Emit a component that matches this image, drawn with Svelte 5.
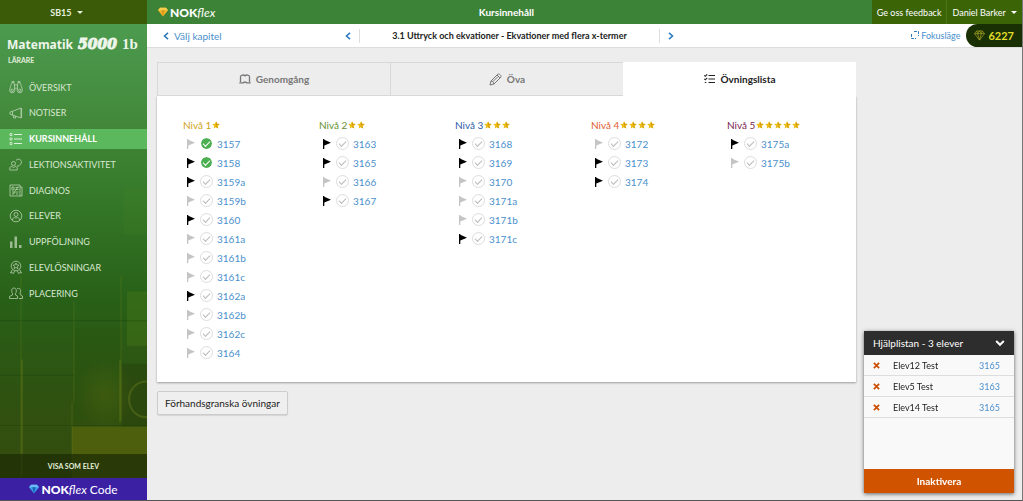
<script>
    let active_tab = 'ovningslista';
    let help_open = true;

    const menu = [
        { icon: 'binoculars', label: 'ÖVERSIKT' },
        { icon: 'megaphone', label: 'NOTISER' },
        { icon: 'list', label: 'KURSINNEHÅLL', active: true },
        { icon: 'lesson', label: 'LEKTIONSAKTIVITET' },
        { icon: 'diagnos', label: 'DIAGNOS' },
        { icon: 'user', label: 'ELEVER' },
        { icon: 'bars', label: 'UPPFÖLJNING' },
        { icon: 'award', label: 'ELEVLÖSNINGAR' },
        { icon: 'people', label: 'PLACERING' }
    ];

    const tabs = [
        { id: 'genomgang', label: 'Genomgång' },
        { id: 'ova', label: 'Öva' },
        { id: 'ovningslista', label: 'Övningslista' }
    ];

    function ex(name, flag = false, done = false) {
        return { name, flag, done };
    }

    let levels = [
        { nr: 1, items: [
            ex('3157', false, true), ex('3158', true, true), ex('3159a', true), ex('3159b'),
            ex('3160', true), ex('3161a'), ex('3161b'), ex('3161c'),
            ex('3162a', true), ex('3162b'), ex('3162c'), ex('3164')
        ] },
        { nr: 2, items: [ex('3163', true), ex('3165', true), ex('3166'), ex('3167', true)] },
        { nr: 3, items: [
            ex('3168', true), ex('3169', true), ex('3170'), ex('3171a'), ex('3171b'), ex('3171c', true)
        ] },
        { nr: 4, items: [ex('3172'), ex('3173', true), ex('3174', true)] },
        { nr: 5, items: [ex('3175a', true), ex('3175b')] }
    ];

    let help = [
        { name: 'Elev12 Test', exercise: '3165' },
        { name: 'Elev5 Test', exercise: '3163' },
        { name: 'Elev14 Test', exercise: '3165' }
    ];

    function toggle_flag(item) {
        item.flag = !item.flag;
        levels = levels;
    }
    function remove_help(row) {
        help = help.filter((h) => h !== row);
    }
</script>

<div class="page">
    <aside class="sidebar">
        <svg class="backdrop" viewBox="0 0 147 454" preserveAspectRatio="none" aria-hidden="true">
            <defs>
                <linearGradient id="leaf" x1="0" y1="0" x2="0" y2="1">
                    <stop offset="0" stop-color="#4c9b4f" />
                    <stop offset="0.2" stop-color="#43893b" />
                    <stop offset="0.38" stop-color="#347728" />
                    <stop offset="0.58" stop-color="#286018" />
                    <stop offset="0.78" stop-color="#2f5211" />
                    <stop offset="1" stop-color="#374b0d" />
                </linearGradient>
                <radialGradient id="glow">
                    <stop offset="0" stop-color="#66720f" stop-opacity="0.3" />
                    <stop offset="1" stop-color="#66720f" stop-opacity="0" />
                </radialGradient>
            </defs>
            <rect width="147" height="454" fill="url(#leaf)" />
            <rect x="124" y="156" width="23" height="45" fill="#4b8721" opacity="0.15" />
            <rect x="127" y="255" width="20" height="52" fill="#5a8b16" opacity="0.25" />
            <rect x="74" y="290" width="47" height="90" fill="#24520b" opacity="0.2" />
            <rect x="122" y="324" width="25" height="60" fill="#263b0c" opacity="0.4" />
            <ellipse cx="105" cy="354" rx="30" ry="34" fill="url(#glow)" />
            <rect x="72" y="384" width="75" height="70" fill="#68700c" opacity="0.5" />
            <path d="M0 283h147M0 335h74M0 383h147" stroke="#193f08" opacity="0.4" />
            <path d="M21 240V454M72 360v74M74 265v95M121 240v138" stroke="#84951c" opacity="0.25" fill="none" />
            <path d="M22 320v110M120 320v60" stroke="#91991b" opacity="0.4" />
            <circle cx="146" cy="358" r="17" fill="none" stroke="#62761b" stroke-width="2" opacity="0.5" />
        </svg>
        <button class="class_pick">SB15 <i class="caret"></i></button>
        <h1 class="book"><span>Matematik</span><span class="number">5000</span><span class="level">1b</span></h1>
        <p class="role">LÄRARE</p>
        <nav class="menu">
            {#each menu as item}
                <a href="#{item.icon}" class:active={item.active}>
                    <svg viewBox="0 0 14 14" width="14" height="14" fill="none" stroke="currentColor" stroke-width="0.8">
                        {#if item.icon == 'binoculars'}
                            <path d="M5.7 10.3a2.5 2.5 0 1 1-5 0c0-2 1.600-6 2-7 .3-.8 2.300-.8 2.600 0l.4 7zM8.300 10.300a2.500 2.500 0 1 0 5 0c0-2-1.600-6-2-7-.3-.8-2.300-.8-2.600 0zM5.500 5h3M5.700 8.200h2.600M3 3V1.500h2V3M9 3V1.500h2V3" />
                            <circle cx="3.200" cy="10.300" r="1.200" /><circle cx="10.800" cy="10.300" r="1.200" />
                        {:else if item.icon == 'megaphone'}
                            <path d="M1 6l2.500-.7L12 2v10L3.500 9 1 8.200zM12.600 2v10M3.500 5.300V9M4 9.200l.8 2.800h2l-.6-2" />
                        {:else if item.icon == 'list'}
                            <path d="M5 2.500h8M5 7h8M5 11.500h8" stroke-width="1" />
                            <path d="M1 1.500h2v2H1zM1 6h2v2H1zM1 10.500h2v2H1z" />
                        {:else if item.icon == 'lesson'}
                            <circle cx="4.500" cy="6.500" r="2" />
                            <path d="M.8 13v-2c0-1 1-1.500 2-1.800.4 1.600 3 1.600 3.400 0 1 .3 2 .8 2 1.800v2zM7 3.500a3 3 0 1 1 3.500 4.500L9 9.500V8" />
                        {:else if item.icon == 'diagnos'}
                            <path d="M1 2h10v11H1zM11 4h2v9h-2M3 4h2v3H3zM6.500 4.500h3M6.500 6.500h3M3 9h6.500M3 11h2v-2M7 11h2" />
                            <path d="M5.500 8.500l4-5" />
                        {:else if item.icon == 'user'}
                            <circle cx="7" cy="7" r="5.800" /><circle cx="7" cy="5.500" r="2" />
                            <path d="M3.200 11c.3-2 2-2.400 2.600-2.400.5.5 1.900.5 2.400 0 .6 0 2.300.4 2.600 2.400" />
                        {:else if item.icon == 'bars'}
                            <path d="M1 6.500h2.500V13H1zM5.500 1.500H8V13H5.500zM10 10h2.500v3H10z" fill="currentColor" stroke="none" opacity="0.8" />
                        {:else if item.icon == 'award'}
                            <circle cx="7" cy="6" r="4.800" /><path d="M7 3l.9 1.900 2 .3-1.400 1.400.3 2L7 7.600l-1.800 1 .3-2-1.400-1.400 2-.3zM3.500 9.500L1.500 13l2-.3.8 1 1.500-3M10.500 9.500l2 3.500-2-.3-.8 1-1.500-3" />
                        {:else}
                            <path d="M.5 12.500v-2l3-1.500V7.500C2 5.500 2.500 2 5 2s3 3.500 1.500 5.500V9l2 1v2.500zM8 2.800c2.500-1.500 4.500 1 3.200 4V8.500l2.300 1.500v2.500H10" />
                        {/if}
                    </svg>
                    {item.label}
                </a>
            {/each}
        </nav>
        <button class="as_student">VISA SOM ELEV</button>
        <a href="#code" class="code">
            <svg viewBox="0 0 12 12" width="10" height="10"><path d="M2.500 1h7L12 4 6 11.500 0 4z" fill="#3c9be8" /><path d="M2.500 1L0 4h12L9.500 1z" fill="#6dbcf5" /><path d="M4 4l2 7.500L8 4z" fill="#1764b5" /></svg>
            <b>NOK</b><em>flex</em>&nbsp;Code
        </a>
    </aside>

    <div class="main">
        <header class="topbar">
            <a href="#home" class="logo">
                <svg viewBox="0 0 12 12" width="10" height="10"><path d="M2.500 1h7L12 4 6 11.500 0 4z" fill="#efb52b" /><path d="M2.500 1L0 4h12L9.500 1z" fill="#f8cd4d" /><path d="M4 4l2 7.500L8 4z" fill="#d9981a" /></svg>
                <b>NOK</b><em>flex</em>
            </a>
            <h2>Kursinnehåll</h2>
            <div class="account">
                <button>Ge oss feedback</button>
                <button>Daniel Barker <i class="caret"></i></button>
            </div>
        </header>

        <div class="subbar">
            <a href="#chapters" class="chapter">
                <svg viewBox="0 0 6 8" width="6" height="8"><path d="M5 .8L1.500 4 5 7.200" /></svg>
                Välj kapitel
            </a>
            <div class="pager">
                <button aria-label="Föregående"><svg viewBox="0 0 6 8" width="6" height="8"><path d="M5 .8L1.500 4 5 7.200" /></svg></button>
                <h3>3.1 Uttryck och ekvationer - Ekvationer med flera x-termer</h3>
                <button aria-label="Nästa"><svg viewBox="0 0 6 8" width="6" height="8"><path d="M1 .8L4.500 4 1 7.200" /></svg></button>
            </div>
            <div class="tools">
                <a href="#focus">
                    <svg viewBox="0 0 8 8" width="8" height="8" class="thin"><path d="M3 .5h4.500V5M.5 3v4.500H5" /></svg>
                    Fokusläge
                </a>
                <span class="gems">
                    <svg viewBox="0 0 12 12" width="11" height="11"><path d="M3 1h6l2.500 3L6 11 .5 4zM.5 4h11M3 1l1 3 2 7 2-7 1-3M4 4l2-3 2 3" /></svg>
                    6227
                </span>
            </div>
        </div>

        <main>
            <div class="tabs" role="tablist">
                {#each tabs as tab}
                    <button role="tab" aria-selected={active_tab == tab.id} class:active={active_tab == tab.id} on:click={() => active_tab = tab.id}>
                        {#if tab.id == 'genomgang'}
                            <svg viewBox="0 0 12 10" width="12" height="10"><path d="M1.500 8V2.800C1.500.6 5 .6 6 1.800 7 .6 10.500.6 10.500 2.800V8M.3 8.800h3.500c1 0 1.200-.8 2.200-.8s1.200.8 2.200.8h3.500" stroke-width="1.300" /></svg>
                        {:else if tab.id == 'ova'}
                            <svg viewBox="0 0 13 13" width="13" height="13"><path d="M1 12l1-4L8.800 1.200c1.200-1 4 1.500 3 3L5 11zM2 8c1.500 0 3 1.500 3 3M8 2l3 3M4 8.500L9 3.500" /></svg>
                        {:else}
                            <svg viewBox="0 0 11 10" width="11" height="10"><path d="M4.500 1.500H11M4.500 5H11M4.500 8.500H11" stroke-width="1.200" /><path d="M.3 1.300l1 1L3.200.3M.3 4.800l1 1 1.900-2M.8 8.500h1.500" stroke-width="1.100" /></svg>
                        {/if}
                        {tab.label}
                    </button>
                {/each}
            </div>
            <section class="panel">
                {#each levels as level}
                    <div class="level l{level.nr}">
                        <h4>
                            Nivå {level.nr}
                            <span class="stars">
                                {#each Array(level.nr) as _}
                                    <svg viewBox="0 0 10 10" width="8" height="8"><path d="M5 .3l1.400 3.100 3.400.4-2.500 2.300.7 3.400L5 7.800 2 9.500l.7-3.400L.2 3.800l3.400-.4z" fill="#ecbd16" /><path d="M5 .3l1.400 3.100 3.400.4L5 5.500zM5 5.500l3 4L5 7.800z" fill="#d19a0a" /></svg>
                                {/each}
                            </span>
                        </h4>
                        <ul>
                            {#each level.items as item}
                                <li>
                                    <button class="flag" class:on={item.flag} aria-label="Flagga {item.name}" on:click={() => toggle_flag(item)}>
                                        <svg viewBox="0 0 8 10" width="8" height="10"><path d="M0 0h1.300v.8L8 3.700 1.300 6.500V10H0z" fill="currentColor" /></svg>
                                    </button>
                                    <input type="checkbox" bind:checked={item.done} aria-label="Klar {item.name}">
                                    <a href="#{item.name}">{item.name}</a>
                                </li>
                            {/each}
                        </ul>
                    </div>
                {/each}
            </section>
            <button class="preview">Förhandsgranska övningar</button>
        </main>
    </div>
</div>

<section class="help">
    <button class="help_head" on:click={() => help_open = !help_open}>
        Hjälplistan - {help.length} elever
        <svg viewBox="0 0 10 8" width="10" height="8"><path d="M1.200 2L5 5.800 8.800 2" /></svg>
    </button>
    {#if help_open}
        <ul>
            {#each help as row}
                <li>
                    <button aria-label="Ta bort {row.name}" on:click={() => remove_help(row)}>
                        <svg viewBox="0 0 8 8" width="7" height="7"><path d="M1 1l6 6M7 1L1 7" /></svg>
                    </button>
                    <span>{row.name}</span>
                    <a href="#{row.exercise}">{row.exercise}</a>
                </li>
            {/each}
        </ul>
        <button class="deactivate">Inaktivera</button>
    {/if}
</section>

<style>
    :global(body) {
        background: #ededed;
        font-family: Lato, sans-serif;
        font-size: 10px;
        color: #222;
    }
    * {
        box-sizing: border-box;
    }
    h1, h2, h3, h4, p, ul {
        margin: 0;
        padding: 0;
        list-style: none;
    }
    button {
        font: inherit;
        color: inherit;
        background: none;
        border: 0;
        padding: 0;
        cursor: pointer;
    }
    a {
        color: #4a8fcd;
        text-decoration: none;
    }
    svg {
        flex: none;
    }
    .page {
        display: grid;
        grid-template-columns: 147px 1fr;
        min-height: 100vh;
        border-right: 1px solid #777;
        border-bottom: 1px solid #555;
    }
    .caret {
        display: inline-block;
        margin-left: 3px;
        border: 3px solid transparent;
        border-top-color: currentColor;
        border-bottom: 0;
        vertical-align: 2px;
    }

    .sidebar {
        position: relative;
        display: flex;
        flex-direction: column;
        color: #e4efdc;
    }
    .backdrop {
        position: absolute;
        z-index: -1;
        inset: 24px 0 0;
        width: 100%;
        height: calc(100% - 24px);
    }
    .class_pick {
        height: 24px;
        background: #3b5b09;
        font-size: 9px;
        font-weight: 700;
        padding-right: 14px;
    }
    .book {
        display: flex;
        align-items: baseline;
        gap: 5px;
        padding: 10px 0 0 7px;
        font: 700 12px/20px "Noto Sans", sans-serif;
        color: #eef5ea;
    }
    .book .number {
        font: italic 700 14px/20px "DejaVu Serif", serif;
        -webkit-text-stroke: 1px;
    }
    .book .level {
        font: 700 15px/20px "Liberation Serif", serif;
    }
    .role {
        padding-left: 8px;
        font-size: 7px;
        font-weight: 700;
        line-height: 10px;
    }
    .menu {
        display: flex;
        flex-direction: column;
        justify-content: space-between;
        height: 226px;
        margin-top: 12px;
    }
    .menu a {
        display: flex;
        align-items: center;
        gap: 6px;
        height: 20px;
        padding-left: 9px;
        color: #d9e8d2;
        font-size: 9px;
    }
    .menu a svg {
        opacity: 0.8;
    }
    .menu a.active {
        background: #5cb85c;
        color: #fff;
        font-weight: 700;
    }
    .as_student {
        height: 24px;
        margin-top: auto;
        background: rgba(30, 45, 5, 0.75);
        font-size: 7px;
        font-weight: 700;
    }
    .code, .logo {
        display: flex;
        align-items: center;
        color: #fff;
        font-size: 12px;
    }
    .code {
        justify-content: center;
        height: 22px;
        background: #3c20a4;
    }
    .code svg, .logo svg {
        margin-right: 2px;
    }
    .code b, .logo b {
        font-weight: 900;
    }

    .topbar {
        display: grid;
        grid-template-columns: 120px 1fr 126px auto;
        align-items: center;
        height: 24px;
        background: #3d8337;
        color: #fff;
    }
    .logo {
        padding-left: 11px;
    }
    .topbar h2 {
        font-size: 10px;
        text-align: center;
    }
    .account {
        grid-column: 4;
        display: flex;
        height: 24px;
        background: #3b6407;
        font-size: 9px;
    }
    .account button {
        padding: 0 5px;
    }
    .account button + button {
        border-left: 1px solid #4c7718;
    }
    .subbar {
        display: grid;
        grid-template-columns: 190fr 345fr 340fr;
        align-items: center;
        height: 24px;
        background: #fff;
        border-bottom: 1px solid #ddd;
    }
    .subbar svg {
        fill: none;
        stroke: #2e7cc0;
        stroke-width: 1.6;
    }
    .subbar svg.thin {
        stroke-width: 1;
        stroke-dasharray: 3 1;
    }
    .chapter {
        display: flex;
        align-items: center;
        gap: 5px;
        padding-left: 16px;
    }
    .pager {
        display: flex;
        align-items: center;
    }
    .pager button {
        width: 22px;
    }
    .pager h3 {
        flex: 1;
        border: 1px solid #ddd;
        border-width: 0 1px;
        font-size: 9px;
        line-height: 14px;
        text-align: center;
    }
    .tools {
        display: flex;
        justify-content: flex-end;
        align-items: center;
        gap: 6px;
        font-size: 9px;
    }
    .gems {
        display: flex;
        align-items: center;
        gap: 3px;
        height: 23px;
        padding: 0 8px;
        border-radius: 12px 0 0 12px;
        background: #183004;
        color: #e3dd2b;
        font-size: 11px;
        font-weight: 700;
    }
    .gems svg {
        stroke: #b5b02a;
        stroke-width: 0.7;
    }

    main {
        padding: 14px 166px 12px 10px;
    }
    .tabs {
        display: grid;
        grid-template-columns: repeat(3, 1fr);
    }
    .tabs button {
        display: flex;
        align-items: center;
        justify-content: center;
        gap: 5px;
        height: 34px;
        border: 1px solid #d8d8d8;
        border-right: 0;
        color: #777;
        font-weight: 700;
    }
    .tabs button.active {
        background: #fff;
        border-color: #fff;
        color: #222;
    }
    .tabs svg {
        fill: none;
        stroke: currentColor;
    }
    .panel {
        display: grid;
        grid-template-columns: repeat(5, 1fr);
        column-gap: 33px;
        padding: 20px 26px;
        background: #fff;
        box-shadow: 0 1px 2px rgba(0, 0, 0, 0.35);
    }
    .level h4 {
        display: flex;
        align-items: center;
        gap: 1px;
        height: 18px;
        font-weight: 400;
        white-space: nowrap;
    }
    .stars {
        display: flex;
        gap: 1px;
    }
    .l1 h4 { color: #cfa31c; }
    .l2 h4 { color: #64902c; }
    .l3 h4 { color: #2b5ca8; }
    .l4 h4 { color: #e2592f; }
    .l5 h4 { color: #7c1c50; }
    .level li {
        display: flex;
        align-items: center;
        height: 19px;
        padding-left: 4px;
    }
    .flag {
        display: flex;
        width: 13px;
        color: #c4c4c4;
    }
    .flag.on {
        color: #000;
    }
    input {
        appearance: none;
        display: grid;
        place-items: center;
        width: 13px;
        height: 13px;
        margin: 0 4px 0 0;
        border: 1px solid #ddd;
        border-radius: 50%;
        cursor: pointer;
    }
    input::before {
        content: '';
        width: 6px;
        height: 3px;
        margin-bottom: 2px;
        border: solid #bbb;
        border-width: 0 0 1px 1px;
        transform: rotate(-45deg);
    }
    input:checked {
        background: #4caf50;
        border: 1px solid #fff;
        background-clip: padding-box;
    }
    input:checked::before {
        border-color: #fff;
    }
    .preview {
        height: 24px;
        margin-top: 9px;
        padding: 0 7px;
        border: 1px solid #ccc;
        border-radius: 2px;
        background: #efefef;
        box-shadow: 0 1px 1px rgba(0, 0, 0, 0.1);
    }

    /* stays over the page while scrolling */
    .help {
        position: fixed;
        right: 9px;
        bottom: 8px;
        width: 150px;
        background: #f9f9f9;
        box-shadow: 0 1px 4px rgba(0, 0, 0, 0.6);
        font-size: 9px;
    }
    .help_head {
        display: flex;
        align-items: center;
        justify-content: space-between;
        width: 100%;
        height: 24px;
        padding: 0 9px;
        background: #2d2d2d;
        color: #fff;
        font-size: 10px;
    }
    .help svg {
        fill: none;
        stroke: #fff;
        stroke-width: 2;
    }
    .help ul {
        min-height: 114px;
    }
    .help li {
        display: flex;
        align-items: center;
        height: 21px;
        padding: 0 14px 0 9px;
        border-bottom: 1px solid #ddd;
    }
    .help li button {
        display: flex;
        width: 20px;
    }
    .help li svg {
        stroke: #cc4e00;
    }
    .help li span {
        flex: 1;
    }
    .deactivate {
        width: 100%;
        height: 24px;
        background: #d05400;
        color: #fff;
        font-size: 10px;
        font-weight: 700;
    }
</style>
